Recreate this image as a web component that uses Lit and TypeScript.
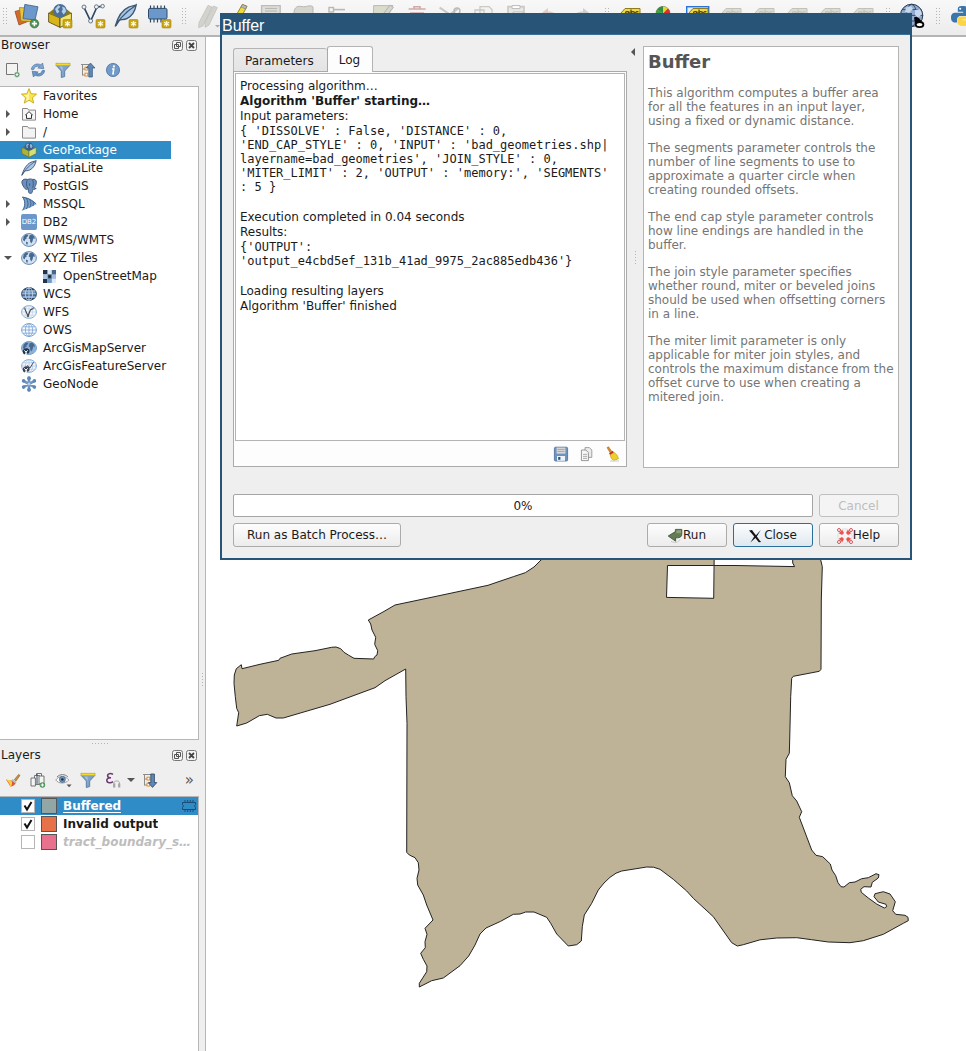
import { LitElement, html, css, svg, nothing, type TemplateResult } from "lit";
import { customElement, property, state } from "lit/decorators.js";
import { classMap } from "lit/directives/class-map.js";
import { styleMap } from "lit/directives/style-map.js";

type Art = ReturnType<typeof svg>;

/* ---------- shared pieces of icon art ---------- */

const newBadge = svg`
  <rect x="15" y="15.5" width="9" height="8.5" rx="1.2" fill="#c9a514" stroke="#a58508" stroke-width=".6"/>
  <path d="M19.5 17v5.6M17 18.3l5 3M22 18.3l-5 3" stroke="#fff8d8" stroke-width="1.3" fill="none"/>`;

const land = svg`
  <path d="M2.6 4.6 5 2.6l2.4.2-.6 1.8-1.4.6.4 1.4-1.6.9-.6 2L2 8Z" fill="#46698f"/>
  <path d="M8.6 3.2 11 2.6l2.3 1.8.7 2.4-1.8-.2-.6 2.6-1.4 2.4-1.2-2.6.2-1.8-1.6-.8Z" fill="#46698f"/>
  <path d="M5 9.6l2 .8-.8 2.6-1-.9Z" fill="#46698f"/>`;

const globeBase = svg`<ellipse cx="8" cy="8" rx="7.4" ry="6.4" fill="#d3e0ef" stroke="#6288b6" stroke-width="1"/>`;

const gridLines = svg`
  <ellipse cx="8" cy="8" rx="3.6" ry="6.4"/><path d="M8 1.6v12.8M.8 8h14.4M2 4.8h12M2 11.2h12"/>`;

const label = (fill: string, ink: string, edge: string): Art => svg`
  <path d="M2.5 9.5 7 4.5h15v13H7L2.5 13Z" fill="${fill}" stroke="${edge}" stroke-width="1"/>
  <g fill="none" stroke="${ink}" stroke-width="1.2">
    <circle cx="9.2" cy="9.4" r="1.8"/><path d="M11 7.4v4.2M13 5.6v6"/><circle cx="14.8" cy="9.4" r="1.8"/>
    <path d="M20.4 8a1.8 1.8 0 1 0 0 2.8"/>
  </g>`;

const funnel = svg`
  <path d="M1.2 3.4h13.6L9.7 9v5.6l-3.4.9V9Z" fill="#7ea2cc" stroke="#4d7298" stroke-width=".8"/>
  <path d="M7.4 8.8 4.6 4.6h3v10Z" fill="#a9c3e0"/>
  <rect x="1" y="1.2" width="14" height="2.6" fill="#f3da2d" stroke="#b79c1d" stroke-width=".6"/>`;

const treeLines = svg`
  <path d="M1 2.5h9M2.5 2.5v11M2.5 7h3M2.5 13h3" stroke="#8c8c8c" stroke-width="1" fill="none"/>
  <rect x="5" y="5.2" width="2.8" height="2.8" fill="#fff" stroke="#ee8b1c"/>
  <rect x="5" y="11.2" width="2.8" height="2.8" fill="#fff" stroke="#ee8b1c"/>`;

const feather = svg`
  <path d="M.8 15.4C2 11 5 4.4 10 2.2c2-.9 4-.9 5.2-1.6-.6 3.4-2.6 7.6-6.4 9.4-2 .9-4 .6-5.4 1.2-1 .8-1.6 2.6-2.6 4.2Z" fill="#a9c6e6" stroke="#3c5673" stroke-width=".9"/>
  <path d="M1.2 15 5 9.4C8 6 11 3.4 14.4 1.4" stroke="#3c5673" stroke-width=".8" fill="none"/>`;

/* ---------- 16px icons ---------- */

const icons: Record<string, Art> = {
  star: svg`<path d="M8 .6 10.1 5.7l5.5.4-4.2 3.6 1.3 5.4L8 12.2l-4.7 2.9 1.3-5.4L.4 6.1l5.5-.4Z" fill="#f9e64b" stroke="#c9a81c" stroke-width=".9"/><path d="M8 3v8.4l-3 1.8.9-3.7-2.9-2.4 3.6-.3Z" fill="#fdf6a6"/>`,
  home: svg`<path d="M1.5 2.5h5l1.2 1.6h6.8v10h-13Z" fill="#f5f5f5" stroke="#8a8a8a"/><path d="M4.6 9 8 5.6 11.4 9H10.500v3.400h-5V9Z" fill="#fff" stroke="#333" stroke-width="1"/>`,
  folder: svg`<path d="M1.5 2.5h5l1.2 1.6h6.8v10h-13Z" fill="#f3f3f3" stroke="#8a8a8a"/>`,
  geopackage: svg`<path d="M.8 5.4 8 8.8v6.4L.8 11.6Z" fill="#a9b33a" stroke="#5b6420" stroke-width=".5"/><path d="M15.2 5.4 8 8.8v6.4l7.2-3.6Z" fill="#d6df78" stroke="#5b6420" stroke-width=".5"/><path d="M2 5 8 1l6 4-6 3.4Z" fill="#4a6a8e"/><circle cx="8" cy="4.4" r="3.9" fill="#3c5b80"/><path d="M5 3l2-1.8 1 1.4L6.4 4l.8 1.4-1.4.8ZM9 2l1.8.6.8 2.2-1.6 1.6-1-1.6Z" fill="#8fb4de"/>`,
  feather,
  elephant: svg`<path d="M1 3.2C2 1 4.6.7 6.4 1.5 8.4.6 10.6 1 11.6 1.4c2.2-.6 3.8.8 3.8 2.8 0 2.2-1.2 4.6-2.4 5.6.6.6 1.6.5 2.2.3-.6 1.4-2.4 1.6-3.4 1-.4 1.8 0 3.6-1.6 4.2-1.6.5-2.6-.4-2.8-2V10.6C6 11.6 5 11.8 4.2 10.8 2.6 9 .2 5.6 1 3.2Z" fill="#6a91be" stroke="#3a5679" stroke-width=".9"/><path d="M6.4 1.8C5.2 3.6 5 8 6.8 10.4M11.4 1.6c1 2 1.4 5 .2 8M8.6 5.4v2.4" fill="none" stroke="#3a5679" stroke-width=".9"/>`,
  mssql: svg`<path d="M1.4 1C6 1.6 11 3.6 15.2 8 12 10.6 7 12.6 1.4 14.4 4.2 10.6 4.4 5 1.4 1Z" fill="#7aa0cd"/><path d="M1.4 1C4.6 4.6 4.6 10.4 1.4 14.4M5 2c2.6 3 2.6 8 .2 11M8.6 3.4c1.8 2.6 1.8 6 0 8.2M11.8 5.2c.8 1.6.8 3.4 0 4.8M1.4 1C7 1.8 12 4.4 15.2 8" stroke="#3d618c" stroke-width="1" fill="none"/>`,
  globe: svg`${globeBase}${land}`,
  tiles: svg`<rect x="2" y="2" width="13" height="13" fill="#dfeaf6"/><g fill="#22344d"><rect x="2" y="2" width="4.4" height="4.4"/><rect x="2" y="10.8" width="4.4" height="4.2"/></g><rect x="6.4" y="6.4" width="4.4" height="4.4" fill="#38506e"/><rect x="7.6" y="7.6" width="2" height="2" fill="#0e1826"/><g fill="#7199c9"><rect x="6.4" y="10.8" width="4.4" height="4.2"/><rect x="10.8" y="6.4" width="4.2" height="4.4" fill="#9dbce0"/></g><rect x="10.8" y="2" width="4.2" height="4.4" fill="#48658a"/><rect x="2" y="6.4" width="4.4" height="4.4" fill="#a9c6e6"/>`,
  wcs: svg`<ellipse cx="8" cy="8" rx="7.4" ry="6.4" fill="#6d97c7" stroke="#2d4765"/><path d="M1 8h14v1.6H1zM3 3h10l1 2H2zM3 13h10l1-1.6H2z" fill="#2d4765"/><g fill="none" stroke="#c9dcf0" stroke-width=".8">${gridLines}</g>`,
  wfs: svg`<ellipse cx="8" cy="8" rx="7.4" ry="6.4" fill="#f4f8fd" stroke="#86abd6"/><g fill="none" stroke="#bcd2ec" stroke-width=".7">${gridLines}</g><path d="M3.6 4.4 7 12l2.4-6 3-1.8" fill="none" stroke="#444" stroke-width="1.1"/><circle cx="3.6" cy="4.4" r="1.1" fill="#888"/><circle cx="12.4" cy="4.2" r="1.1" fill="#888"/><circle cx="7" cy="12" r="1.1" fill="#555"/>`,
  ows: svg`<ellipse cx="8" cy="8" rx="7.4" ry="6.4" fill="#f6faff" stroke="#78a2d3"/><g fill="none" stroke="#78a2d3" stroke-width=".8">${gridLines}</g>`,
  arcmap: svg`${globeBase}<ellipse cx="8" cy="8" rx="7.4" ry="6.4" fill="#8fb0d6"/>${land}<path d="M3 9c2-1.400 4.600-.8 5.400.8.6 1.600-.2 3.600-1.800 4.200L5.600 12 3.400 14.400C1.400 13.200 1 10.600 3 9Z" fill="#22334a"/><path d="M3.200 10.400 5 12l1.800-1.600M5 12v2.600" stroke="#fff" stroke-width="1" fill="none"/>`,
  arcfeature: svg`<ellipse cx="8" cy="8" rx="7.4" ry="6.4" fill="#f2f7fc" stroke="#86abd6"/><g fill="none" stroke="#a6c3e4" stroke-width=".7">${gridLines}</g><path d="M6 7.4 9 10l3.6-6" stroke="#556" fill="none"/><path d="M3 9c2-1.400 4.600-.8 5.400.8.6 1.600-.2 3.600-1.800 4.200L5.600 12 3.400 14.400C1.400 13.200 1 10.600 3 9Z" fill="#3a434f"/><path d="M3.200 10.400 5 12l1.800-1.600M5 12v2.600" stroke="#fff" stroke-width="1" fill="none"/>`,
  geonode: svg`<g stroke="#6d94c1" stroke-width="2.6" stroke-linecap="round"><path d="M8 1.800v12.400M2.400 4.800l11.200 6.400M13.600 4.800 2.400 11.200"/></g><g fill="#5c87b8"><circle cx="8" cy="2.200" r="1.900"/><circle cx="8" cy="13.800" r="1.900"/><circle cx="2.600" cy="4.900" r="1.800"/><circle cx="13.400" cy="4.900" r="1.800"/><circle cx="2.600" cy="11.100" r="1.800"/><circle cx="13.400" cy="11.100" r="1.800"/></g><circle cx="8" cy="8" r="1.400" fill="#b8cfe8"/>`,

  addItem: svg`<path d="M1.500 1.500h11v11h-11z" fill="#f3f3f3" stroke="#757575"/><circle cx="12" cy="12.600" r="2.800" fill="#4f9a5d" stroke="#eee" stroke-width=".6"/><path d="M12 11.200v2.800M10.600 12.600h2.800" stroke="#fff"/>`,
  refresh: svg`<path d="M1.4 7.4C1.8 3 6.6.6 10.8 2.800L12.600 1l1.200 5.800L7.800 6l1.800-1.600C7 3.600 4.200 4.800 3.800 7.400Z" fill="#7fa5d2" stroke="#5379a6" stroke-width=".7"/><path d="M14.600 8.600C14.200 13 9.400 15.400 5.200 13.200L3.400 15 2.200 9.200 8.200 10l-1.800 1.600c2.600.8 5.400-.4 5.800-3Z" fill="#6d96c8" stroke="#47709f" stroke-width=".7"/>`,
  funnel,
  collapse: svg`${treeLines}<path d="M10.500 1 15 6h-2.600v9H8.800V6H6.200Z" fill="#5e88b8" stroke="#36587f" stroke-width=".7"/>`,
  expand: svg`${treeLines}<path d="M10.500 15.400 6.400 10.600h2.400V2h3.600v8.600h2.400Z" fill="#5e88b8" stroke="#27415f" stroke-width=".8"/>`,
  info: svg`<circle cx="8" cy="8" r="6.600" fill="#6f9ac9" stroke="#4c739f" stroke-width=".8"/><path d="M7 6.900h1.800L7.900 11.800h1.200" fill="none" stroke="#fff" stroke-width="1.500"/><circle cx="8.900" cy="4.400" r="1.100" fill="#fff"/>`,

  brush: svg`<path d="M9.400 7.600 13.600 2.400 15 3.400 11 9Z" fill="#c98f43" stroke="#8d5d22" stroke-width=".6"/><path d="M7.600 7 11.600 10 10.600 11.400 6.400 8.400Z" fill="#b9b9b9"/><path d="M1 7.400C3 8 4.600 8.400 6.400 8.400l4.200 3C9 13.600 7 14.600 5.400 14.400 4 12 2.600 9.800 1 7.400Z" fill="#e2542c"/><path d="M1 7.400c2 1.800 4 4.400 4.400 7 2-1.200 2-3.600 1-6Z" fill="#f5cf41"/>`,
  addGroup: svg`<g fill="#f5f5f5" stroke="#666" stroke-width=".9"><path d="M6.500 1.500h5v9h-5z"/><path d="M4.500 3.500h5v9h-5z"/><path d="M1 6h4.400v8H1zM9 4h5v8H9z"/></g><path d="M7 2v10" stroke="#2b4564"/><circle cx="12.400" cy="13" r="2.800" fill="#4f9a5d"/><path d="M12.400 11.400v3.200M10.800 13h3.200" stroke="#fff"/>`,
  eye: svg`<path d="M.8 8C3.400 3.600 10.600 3.400 13.800 8 10.600 12 3.400 12 .8 8Z" fill="#fff" stroke="#9a9a9a"/><circle cx="7.400" cy="7.400" r="3" fill="#6d94c1" stroke="#3f5f86" stroke-width=".7"/><circle cx="7.400" cy="7.400" r="1.200" fill="#1a2838"/><path d="M2 5C5 1.800 10 2 12.800 4.800" stroke="#777" fill="none"/><path d="M11.600 12.600h5l-2.500 2.600Z" fill="#555"/>`,
  epsilon: svg`<path d="M8 2.400C5.600.8 2.400 1.600 2.600 3.800c.1 1.400 1.600 2 3.400 1.900C3.600 5.600 1.600 6.600 1.800 8.600c.2 2.400 4 2.800 6.200 1" fill="none" stroke="#6d3a72" stroke-width="1.600"/><path d="M9 12v-1.400c0-2.200 5.400-2.200 5.400 0V12" fill="none" stroke="#a5a5a5" stroke-width="1"/><path d="M9.200 11.500v4M14.200 11.500v4" stroke="#a5a5a5" stroke-width="2.200"/>`,
  chipLine: svg`<path d="M4 2v2.500M6.700 2v2.500M9.300 2v2.500M12 2v2.500M4 11.500V14M6.700 11.500V14M9.300 11.500V14M12 11.500V14" stroke="#1d4d73" fill="none"/><path d="M1.500 4.500h13v2l-1 1.500 1 1.500v2h-13v-2l1-1.500-1-1.500Z" fill="none" stroke="#1d4d73"/>`,
  save: svg`<rect x="1.400" y="1.200" width="13.200" height="13.800" rx="1.200" fill="#6d93c2" stroke="#4a6c96" stroke-width=".8"/><rect x="3.600" y="1.600" width="8.800" height="6" fill="#d9d9d9"/><path d="M4.400 3.400h7.200M4.400 5.400h7.200" stroke="#999" stroke-width=".8"/><rect x="4" y="10" width="8" height="4.800" fill="#eef3f8"/><rect x="5.200" y="11" width="2.200" height="2.800" fill="#2f4f77"/>`,
  copy: svg`<path d="M6 1.600h4.400l2.400 2.400v7.400H6Z" fill="#ececec" stroke="#8d8d8d" stroke-width=".8"/><path d="M2.400 4h4.400l2.600 2.600v8h-7Z" fill="#f7f7f7" stroke="#808080" stroke-width=".8"/><path d="M4 8.400h4M4 10.400h4M4 12.400h4" stroke="#9a9a9a" stroke-width=".8"/>`,
  broom: svg`<path d="M2 1.600 3.600.8l3.400 5-1.800 1.200Z" fill="#d58f2d" stroke="#9e5f13" stroke-width=".5"/><path d="M4 7.400 7.800 4.800 9 6.400 5.200 9Z" fill="#cf2f22"/><path d="M5.200 9 9 6.400c2 1.400 4 3 4.400 6.400L8.600 14.600C6.600 13.400 5.600 11.400 5.200 9Z" fill="#efcf25" stroke="#b39411" stroke-width=".6"/><path d="M5 15h9" stroke="#ccc"/>`,
  run: svg`<path d="M8.400 1.400h6.400v4.800c0 2.400-1.800 3.600-4.400 3.600H8.600v3.400L1.200 8l7.200-4.400Z" fill="#647c54" stroke="#3b4a31" stroke-width=".8"/><path d="M9.400 2.200h4.600v3H9.400Z" fill="#8aa17a"/><path d="M4 13.400c3 1.600 8 1.400 9-2" stroke="#c8c8c8" fill="none"/>`,
  close: svg`<path d="M1 2.600 4 2c1.400 2 2.600 3.800 4 5.200L12.800 2l-4 6.400c1.400 1.800 2.600 3.600 4.400 5.600l-2.400.2C9.400 12.800 8.400 11.400 7.400 10L2.400 14.400 6.200 8.600C4.600 6.600 2.800 4.400 1 2.600Z" fill="#151515"/>`,
  help: svg`<circle cx="8" cy="8" r="5.400" fill="none" stroke="#f2f2f2" stroke-width="3.600"/><circle cx="8" cy="8" r="7.200" fill="none" stroke="#ccc" stroke-width=".5"/><g fill="#f05050"><path d="M1.800 5.200 5.200 1.800 7 5 5 7ZM14.200 5.200l-3.400-3.400L9 5l2 2ZM1.800 10.800l3.400 3.400L7 11 5 9ZM14.200 10.800l-3.400 3.400L9 11l2-2Z"/></g><g fill="#fff" stroke="#c44" stroke-width=".9"><circle cx="2" cy="2" r="1.500"/><circle cx="14" cy="2" r="1.500"/><circle cx="2" cy="14" r="1.500"/><circle cx="14" cy="14" r="1.500"/></g>`,
};

/* ---------- 24px main toolbar icons ---------- */

const grey = "#c9c9c4";
const tools: Record<string, Art> = {
  addLayer: svg`<path d="M0 7.400 9 5l5 12-10 4Z" fill="#d56a2c" stroke="#8f3f13" stroke-width=".7"/><path d="M4.400 3.600 15 4l2 13.600L6 17Z" fill="#e8c53b" stroke="#967a15" stroke-width=".7"/><path d="M9.800.4 23 2.800 20 16 8 14.600Z" fill="#6d98cb" stroke="#3a5d88" stroke-width=".8"/><circle cx="19.400" cy="19.600" r="4.400" fill="#4c9156" stroke="#356b3e" stroke-width=".6"/><path d="M19.400 17v5.200M16.800 19.600H22" stroke="#fff" stroke-width="1.600"/>`,
  newGeopackage: svg`<path d="M.6 9 12 14v9.400L.6 18Z" fill="#d7b51a" stroke="#4d420c" stroke-width=".8"/><path d="M23.400 9 12 14v9.400L23.400 18Z" fill="#f3e36a" stroke="#4d420c" stroke-width=".8"/><path d="M.6 9 5 5.600h14L23.400 9 12 14Z" fill="#8d7a16"/><circle cx="12" cy="6.800" r="6.800" fill="#4d6f97"/><path d="M7 5l3.400-3.800 2 1.600-2.600 2.400 1.600 2.600-2.400 1.600ZM14 2.400l3 1.400 1.200 3.600-2.600 3-2-3 1.200-1.800Z" fill="#b4cfec"/>${newBadge}`,
  newShape: svg`<path d="M3 3.400 9.600 17 16 3l5-.6" fill="none" stroke="#2d4560" stroke-width="1.600"/><g fill="#eef2f6" stroke="#5a6b7c" stroke-width=".9"><circle cx="3" cy="3" r="2"/><circle cx="9.600" cy="17" r="2"/><circle cx="15.400" cy="2.800" r="2"/><circle cx="21.600" cy="2.200" r="1.800"/></g>${newBadge}`,
  newSpatialite: svg`<g transform="scale(1.46)">${feather}</g>${newBadge}`,
  newMemory: svg`<path d="M3.500 1.400v17M7 1.400v17M10.500 1.400v17M14 1.400v17M17.500 1.400v17" stroke="#2f4a69" stroke-width="1.200"/><rect x="1.500" y="4.400" width="18.500" height="10.600" rx="1.400" fill="#6b97ca" stroke="#2f4a69"/>${newBadge}`,
  pencils: svg`<g fill="#d2d2ce" stroke="#bdbdb8" stroke-width=".7"><path d="M11 1.400 15 3 6 22l-4.400 1.600.4-5Z"/><path d="M16.400 2 20.400 3.600 12 21l-4 2.400.2-5Z"/></g><path d="M18 21h5l-2.500 2.600Z" fill="#aaa"/>`,
  pencil: svg`<path d="M12.400.4 17 2.400 6.400 21.800l-4.800 1.800.4-5Z" fill="#efd93e" stroke="#8b7a16" stroke-width=".9"/><path d="m12.400.4 4.600 2-1.400 2.600-4.600-2Z" fill="#b8b8b8" stroke="#777" stroke-width=".6"/>`,
  saveEdits: svg`<path d="M-1.400 1.600h18.600v18H-1.400Z" fill="#dededb" stroke="#bdbdb8" stroke-width="1.400"/><path d="M2 4.400h12M2 7h12" stroke="#b5b5b0"/>`,
  polygon: svg`<path d="M-2 9C-2 3 2 1.600 6 2.600S14 0 17 3v10H0Z" fill="#d6d6d1" stroke="#b8b8b2"/>`,
  vertices: svg`<rect x="0" y="3.500" width="4.500" height="4.500" fill="none" stroke="#b9b9b4" stroke-width="1.400"/><path d="M5 5.600h11" stroke="#b9b9b4" stroke-width="1.600"/>`,
  modify: svg`<path d="M1.600 1.600H21L16 12H1.600Z" fill="#d9dccb" stroke="#b9bda8"/><path d="m18 1 3.400 2.400-8 10-3-2.400Z" fill="#d4d4d0" stroke="#b4b4b0"/>`,
  trash: svg`<path d="M3.600 5h17M5 9h14M9 5V2.800h6V5" stroke="#d0aaaa" stroke-width="1.600" fill="none"/>`,
  cut: svg`<path d="m1.600 3.600 12 8M20 4.400l-9 7" stroke="${grey}" stroke-width="2" fill="none"/><circle cx="19" cy="7" r="3" fill="none" stroke="#bbb" stroke-width="1.400"/>`,
  copyF: svg`<path d="M9 2.600h9l3 3v8H9Z M4 6h9v10H4Z" fill="#f2f2f0" stroke="${grey}" stroke-width="1.300"/>`,
  paste: svg`<path d="M4 2.600h16v18H4Z" fill="#e8e8e5" stroke="${grey}" stroke-width="1.600"/><path d="M8 1.600h8v3H8ZM9 8h10v8H9Z" fill="#fff" stroke="#bbb"/>`,
  undo: svg`<path d="M4 9.600 11 4v3.400c6 0 9 2 9 7-2-3-5-3.600-9-3.400V15Z" fill="#dfccc6"/>`,
  redo: svg`<path d="M20 9.600 13 4v3.400c-6 0-9 2-9 7 2-3 5-3.600 9-3.400V15Z" fill="#cfcfca"/>`,
  labelOn: svg`<g transform="translate(-2 0)">${label("#eed84a", "#4a3c08", "#8f7c1c")}</g>`,
  diagram: svg`<circle cx="10" cy="9.400" r="7" fill="#e9cf2c" stroke="#333" stroke-width=".5"/><path d="M10 9.400 4.200 5.600A7 7 0 0 1 10 2.400Z" fill="#2f8f45"/><path d="M10 9.400V2.400a7 7 0 0 1 5 2.200Z" fill="#e8d52e"/><path d="M10 9.400 3.800 12.400A7 7 0 0 1 4.200 5.600Z" fill="#38a046"/><path d="M10 9.400 15 4.600a7 7 0 0 1 2 4.800Z" fill="#d8322b"/>`,
  labelBox: svg`<rect x=".7" y="2.700" width="22" height="20" fill="#e5edf7" stroke="#2a72d4" stroke-width="1.400"/>${label("#eed84a", "#4a3c08", "#8f7c1c")}`,
  labelOff: label("#dcdcd5", "#c2c2bb", "#c2c2bb"),
  metasearch: svg`<circle cx="10.600" cy="11.400" r="11.200" fill="#8fabd0" stroke="#26364c" stroke-width="1"/><g fill="none" stroke="#26364c" stroke-width=".8"><ellipse cx="10.600" cy="11.400" rx="5" ry="11"/><path d="M0 11.400h22M1.400 5.600h19M1.400 17h19"/></g><path d="M5 3.600 10 2l2 3-4 4-4-1ZM14 6l5-1 2 5-4 4-3-3Z" fill="#c6d8ed"/><path d="M13 13.400c3-1 5 0 6 2l3 3-3 5-5-4Z" fill="#050505"/><ellipse cx="18.600" cy="20.600" rx="3.800" ry="2.600" fill="#fff" stroke="#050505" stroke-width="1.800"/>`,
  python: svg`<path d="M11.400 2c-4 0-4.600 1.600-4.600 3.400v2.400h5.400v1H4.400C2 8.800 0 10 0 13.600s1.800 5 4 5h2v-3c0-2 1.600-3.600 3.600-3.600h5.400c1.800 0 3-1.400 3-3V5.400C18 3 15.400 2 11.400 2Z" fill="#3a76ab"/><circle cx="9.200" cy="4.800" r="1" fill="#fff"/><path d="M12.400 22c4 0 4.600-1.600 4.600-3.400v-2.400h-5.400v-1h7.800c2.400 0 4-1.200 4-4.800s-1.400-4.600-3.600-4.600h-1.400v3c0 2-1.600 3.600-3.600 3.600H9.400c-1.800 0-3 1.400-3 3v3.200c0 2.400 2 3.400 6 3.400Z" fill="#fbd448"/>`,
};

const icon = (name: string, size = 16): TemplateResult => html`
  <svg class="icon" width=${size} height=${size} viewBox="0 0 16 16" aria-hidden="true">${icons[name]}</svg>`;

const iconCss = css`
  .icon { display: block; flex: none; overflow: visible; }
  button { font: inherit; color: inherit; }
  .bare { border: 0; padding: 0; background: none; display: block; }
`;

/* ---------- main toolbar ---------- */

@customElement("main-toolbar")
class MainToolbar extends LitElement {
  static styles = [iconCss, css`
    :host { display: block; background: linear-gradient(#f8f8f8, #ececec); border-bottom: 2px solid #b4b4b4; overflow: hidden; }
    .bar { display: flex; height: 35px; }
    .tool { flex: none; width: 33px; height: 32px; display: grid; place-items: center; }
    .menu { margin-right: 10px; }
    .grip { flex: none; width: 17px; height: 32px; display: grid; place-items: center; }
    .grip:first-child { width: 10px; }
    .dots { width: 6px; height: 18px; background: radial-gradient(circle, #b5b5b5 0 1px, transparent 1px) 0 0 / 3px 3px; }
  `];

  private groups: string[][] = [
    ["addLayer", "newGeopackage", "newShape", "newSpatialite", "newMemory"],
    ["pencils", "pencil", "saveEdits", "polygon", "vertices", "modify", "trash", "cut", "copyF", "paste", "undo", "redo"],
    ["labelOn", "diagram", "labelBox", "labelOff", "labelOff", "labelOff", "labelOff", "labelOff"],
    ["metasearch"],
    ["python"],
  ];

  render() {
    return html`<div class="bar" role="toolbar">${this.groups.map((g) => html`
      <span class="grip"><span class="dots"></span></span>
      ${g.map((n) => html`<button class=${classMap({ bare: true, tool: true, menu: n === "vertices" })} aria-label=${n}>
        <svg class="icon" width="24" height="24" viewBox="0 0 24 24">${tools[n]}</svg></button>`)}`)}</div>`;
  }
}

/* ---------- dock panels ---------- */

const dockCss = css`
  :host { display: flex; flex-direction: column; min-height: 0; min-width: 0; }
  .head { display: flex; align-items: center; height: 17px; padding: 0 2px 0 1px; gap: 3px; }
  .name { flex: 1; margin: 0; font-size: 12px; font-weight: 400; }
  .tools { display: flex; align-items: center; gap: 9px; padding: 0 5px; height: 32px; }
  .list { flex: 1; min-height: 0; background: #fff; border: solid #b6b6b6; border-width: 1px 1px 1px 0; margin: 0; padding: 0; list-style: none; overflow: hidden; }
`;

const headButtons = html`
  <button class="bare" aria-label="Float"><svg class="icon" width="11" height="11" viewBox="0 0 11 11"><rect x=".5" y=".5" width="10" height="10" rx="2" fill="#f4f4f4" stroke="#777"/><path d="M4.500 2.500h4v4h-4zM2.500 4.500h4v4h-4z" fill="#f4f4f4" stroke="#555"/></svg></button>
  <button class="bare" aria-label="Close panel"><svg class="icon" width="11" height="11" viewBox="0 0 11 11"><rect x=".5" y=".5" width="10" height="10" rx="2" fill="#f4f4f4" stroke="#777"/><path d="m3 3 5 5M8 3 3 8" stroke="#444" stroke-width="1.800"/></svg></button>`;

interface Source { name: string; icon: string; arrow?: "right" | "down"; child?: boolean }

@customElement("browser-panel")
class BrowserPanel extends LitElement {
  static styles = [iconCss, dockCss, css`
    .row { display: grid; grid-template-columns: 15px 16px auto; align-items: center; justify-content: start; gap: 0 6px; width: calc(100% - 27px); height: 18px; text-align: left; white-space: nowrap; }
    .child { padding-left: 20px; box-sizing: border-box; }
    .picked { background: #308cc6; color: #fff; }
    .arrow { justify-self: center; width: 0; height: 0; border: 4px solid transparent; margin-left: 1px; }
    .right { border-left: 4px solid #555; border-right: 0; }
    .down { border-top: 4px solid #555; border-bottom: 0; }
    .badge { width: 16px; height: 16px; border-radius: 2px; background: #6b97ca; color: #fff; font-size: 7px; line-height: 16px; text-align: center; }
  `];

  @state() private picked = "GeoPackage";

  private sources: Source[] = [
    { name: "Favorites", icon: "star" },
    { name: "Home", icon: "home", arrow: "right" },
    { name: "/", icon: "folder", arrow: "right" },
    { name: "GeoPackage", icon: "geopackage" },
    { name: "SpatiaLite", icon: "feather" },
    { name: "PostGIS", icon: "elephant" },
    { name: "MSSQL", icon: "mssql", arrow: "right" },
    { name: "DB2", icon: "db2", arrow: "right" },
    { name: "WMS/WMTS", icon: "globe" },
    { name: "XYZ Tiles", icon: "globe", arrow: "down" },
    { name: "OpenStreetMap", icon: "tiles", child: true },
    { name: "WCS", icon: "wcs" },
    { name: "WFS", icon: "wfs" },
    { name: "OWS", icon: "ows" },
    { name: "ArcGisMapServer", icon: "arcmap" },
    { name: "ArcGisFeatureServer", icon: "arcfeature" },
    { name: "GeoNode", icon: "geonode" },
  ];

  render() {
    return html`
      <div class="head"><h2 class="name">Browser</h2>${headButtons}</div>
      <div class="tools">${["addItem", "refresh", "funnel", "collapse", "info"].map((n) => html`
        <button class="bare" aria-label=${n}>${icon(n)}</button>`)}</div>
      <ul class="list">${this.sources.map((s) => html`<li>
        <button class=${classMap({ bare: true, row: true, child: !!s.child, picked: s.name === this.picked })} @click=${() => (this.picked = s.name)}>
          <span class=${s.arrow ? `arrow ${s.arrow}` : ""}></span>
          ${s.icon === "db2" ? html`<span class="badge">DB2</span>` : icon(s.icon)}
          <span>${s.name}</span>
        </button></li>`)}</ul>`;
  }
}

interface Layer { name: string; color: string; on: boolean; memory?: boolean; off?: boolean }

@customElement("layers-panel")
class LayersPanel extends LitElement {
  static styles = [iconCss, dockCss, css`
    .menu { margin: 0 -2px 0 -3px; border: solid transparent; border-width: 4px 4px 0; border-top-color: #555; }
    .more { margin-left: auto; font-size: 15px; line-height: 16px; color: #555; }
    .list { border-bottom: 0; }
    .row { display: flex; align-items: center; height: 18px; padding: 0 1px 0 21px; font-weight: 700; }
    .picked { background: #308cc6; color: #fff; }
    .picked .text { text-decoration: underline; text-underline-offset: 2px; }
    .off { color: #bdbdbd; font-style: italic; }
    .check { position: relative; width: 14px; height: 14px; }
    .box { appearance: none; display: block; width: 14px; height: 14px; margin: 0; border: 1px solid #b6b6b6; background: #fff; }
    .mark { position: absolute; inset: 0; pointer-events: none; }
    .box:not(:checked) + .mark { display: none; }
    .swatch { width: 14px; height: 14px; border: 1px solid #555; margin: 0 6px; }
    .text { overflow: hidden; text-overflow: ellipsis; white-space: nowrap; }
    .memory { margin-left: auto; }
  `];

  @state() private layers: Layer[] = [
    { name: "Buffered", color: "#92a6a5", on: true, memory: true },
    { name: "Invalid output", color: "#e77148", on: true },
    { name: "tract_boundary_s…", color: "#e8718d", on: false, off: true },
  ];

  private toggle(layer: Layer) {
    this.layers = this.layers.map((l) => (l === layer ? { ...l, on: !l.on } : l));
  }

  render() {
    return html`
      <div class="head"><h2 class="name">Layers</h2>${headButtons}</div>
      <div class="tools">
        ${["brush", "addGroup", "eye", "funnel", "epsilon"].map((n) => html`<button class="bare" aria-label=${n}>${icon(n)}</button>`)}
        <span class="menu"></span>
        <button class="bare" aria-label="Expand all">${icon("expand")}</button>
        <button class="bare more" aria-label="More">»</button>
      </div>
      <ul class="list">${this.layers.map((l, i) => html`<li class=${classMap({ row: true, picked: i === 0, off: !!l.off })}>
        <span class="check"><input class="box" type="checkbox" id="layer${i}" .checked=${l.on} @change=${() => this.toggle(l)}>
          <svg class="mark" width="14" height="14" viewBox="0 0 14 14"><path d="M3.500 6.500 6 10.500 10.500 3" fill="none" stroke="#111" stroke-width="2"/></svg></span>
        <span class="swatch" style=${styleMap({ background: l.color })}></span>
        <label class="text" for="layer${i}">${l.name}</label>
        ${l.memory ? html`<span class="memory">${icon("chipLine")}</span>` : nothing}
      </li>`)}</ul>`;
  }
}

/* ---------- map ---------- */

@customElement("map-canvas")
class MapCanvas extends LitElement {
  static styles = css`
    :host { display: block; background: #fff; min-width: 0; overflow: hidden; }
    .map { display: block; width: 100%; height: 100%; }
    .area { fill: #beb297; }
    .hole { fill: #fff; }
    .edge { fill: none; stroke: #232323; stroke-width: 1; stroke-linejoin: round; }
  `;

  private outline = `M560 545 541 560 534 567 525.3 572.7 513.3 576.7 488 585.3 440 595.5 395 605 383 612 368.3 620 370.7 624 372 630 375.7 637.3
    374.7 644.3 377.7 650.7 377 655 374.7 656.7 373.7 659 354 658.3 348.3 655 344 652.3 340.7 648.7 336 647 331.7 647.3
    315 650.7 291.7 654 280 658.3 278.7 660.3 260 664.3 242 668.7 241.3 664.7 236.3 668.7 234.3 675 234 683.3 235.3 696.7
    236.7 708.3 238.7 712.7 236.7 726 246.7 723 259.3 715.7 267.3 714.3 276 718 283.3 718 330 704.3 375 687.7 385 680.7
    405.7 669 406 696.7 407 723.3 406.7 852.3 409.3 855 415 857.7 418.3 862.7 419 870 417 878.3 417.7 885 423.3 895
    426.7 905 433 920 425 928.3 427 934.3 425 941.7 425.3 947.7 420.7 953.3 423.3 959.3 427 966 426.7 971.7 419.3 983.3
    419.3 987 431.7 980.7 443.3 978 460 965.7 468.7 956 475 945 480 934 486 928 500.7 921.3 513.3 914.3 520 914 525.7 912
    534 912 546.7 917.3 550.7 923.3 556.7 934 568.3 946 576.7 944.7 581.3 941 582.3 926.7 584.3 915 591.7 903.3
    598.3 890 604 883 610 877.3 616 873.2 621.7 871 646.7 867 653.5 867.2 660 869.3 673.3 879.3 686.7 891 693.3 898.3
    713.3 916.7 731.7 942.7 737.3 946 743.3 944.7 760 939.8 776.7 938 796.7 937.7 811.7 939.7 828.3 942 850 942.7
    863.3 940.7 883.3 934.3 903.3 923.3 908.3 920.7 908 917.3 905 915.3 895.7 914.3 892.7 910.7 895.3 901.7
    890 894 883.3 891.7 875 893.7 874 896.7 878.3 902 886 904.3 886.7 906.7 884.3 908 876.7 904 868.3 898 861.3 892.3
    860.7 889.3 864 886.7 871 887 872.3 882.3 878.3 878 879 874.7 876 873.7 868.3 877.7 861.7 878.7 855 882
    849.3 882.7 844 887 841 886.7 838 882.7 835.7 875.7 832 870 830.3 864 822.7 856.7 816 855.3 811.7 850 799.3 817.3
    801.7 811.7 796.7 801 792.3 795.7 789.3 782.7 785.3 776.7 786 759.3 789.3 753.3 789.7 740 790.7 696.7
    791.7 678.3 793.3 676.3 819.3 671.3 821 669.3 821.3 600 822.3 566.7 820.7 560 815 545Z`;

  render() {
    return html`<svg class="map" viewBox="206 37 760 1014" preserveAspectRatio="xMinYMin meet" role="img" aria-label="Buffered layer">
      <path class="area" d=${this.outline}/>
      <path class="edge" d=${this.outline}/>
      <path class="hole" d="M667.5 565.5 714.3 565.3 713.7 598.3 666.5 597.4Z"/>
      <path class="hole" d="M714.3 545V565.3L794.6 566.6 792.7 563V545Z"/>
      <path class="edge" d="M714.3 545 713.7 598.3 666.5 597.4 667.5 565.5H735L794.6 566.6 792.7 563V545"/>
    </svg>`;
  }
}

/* ---------- dialog ---------- */

@customElement("buffer-dialog")
class BufferDialog extends LitElement {
  static styles = [iconCss, css`
    :host { display: block; border: 2px solid #285577; border-top: 0; background: #efefef; }
    .title { margin: 0; height: 21px; padding: 0; background: #285577; border-bottom: 1px solid #3a719b; color: #fff; font: 16px/26px "Liberation Sans", Arial, sans-serif; overflow: hidden; }
    .body { display: grid; gap: 26px; padding: 11px; }
    .main { display: grid; grid-template-columns: minmax(0, 1fr) 16px 256px; min-height: 422px; }
    .left { display: flex; flex-direction: column; padding-bottom: 1px; }
    .tabs { display: flex; align-items: flex-end; height: 25px; }
    .tab { border: 1px solid #b4b4b4; border-bottom: 0; border-radius: 3px 3px 0 0; height: 23px; padding: 3px 13px 0 11px; background: linear-gradient(#ebebeb, #e4e4e4); }
    .tab.on { position: relative; height: 26px; margin-bottom: -1px; padding: 2px 12px 0 11px; background: #fdfdfd; border-left-color: #a8a8a8; }
    .tab.first { border-right: 0; }
    .frame { flex: 1; display: flex; flex-direction: column; border: 1px solid #ababab; padding: 1px 1px 0; background: #fdfdfd; }
    .log { flex: 1; border: 1px solid #b4b4b4; background: #fff; padding: 5px 4px; line-height: 15px; }
    .log p { margin: 0; min-height: 15px; }
    .log .code { font: 12px/14px "DejaVu Sans Mono", monospace; min-height: 0; margin-bottom: 1px; white-space: pre-wrap; }
    .log .gap { height: 15px; }
    .actions { display: flex; justify-content: flex-end; align-items: center; gap: 10px; height: 25px; padding-right: 4px; }
    .split { display: flex; flex-direction: column; align-items: center; justify-content: space-between; padding: 2px 0 202px; }
    .fold { border: solid transparent; border-width: 4px 4px 4px 0; border-right-color: #555; margin-right: 4px; }
    .dots { width: 3px; height: 16px; background: radial-gradient(circle, #b5b5b5 0 1px, transparent 1px) 0 0 / 3px 3px; }
    .help { border: 1px solid #b4b4b4; background: #fff; color: #757575; padding: 4px; line-height: 14px; }
    .help h2 { margin: 0 0 13px; font-size: 18px; line-height: 22px; color: #555; }
    .help p { margin: 0 0 13px; }
    .foot { display: grid; gap: 6px; }
    .line { display: flex; gap: 6px; }
    .progress { flex: 1; height: 21px; border: 1px solid #a5a5a5; border-radius: 2px; background: #fff; text-align: center; line-height: 22px; }
    .btn { display: flex; align-items: center; justify-content: center; box-sizing: border-box; width: 80px; height: 24px; padding: 1px 1px 0 0; border: 1px solid #ababab; border-radius: 3px; background: linear-gradient(#fdfdfd, #ececec); white-space: nowrap; }
    .batch { width: auto; padding: 1px 13px 0; margin-right: auto; }
    .focus { border-color: #286f9e; background: linear-gradient(#fcfdfe, #dfe8ef); }
    .btn:disabled { height: 23px; color: #bebebe; border-color: #bfbfbf; background: #f4f4f4; }
  `];

  @property() name = "Buffer";

  render() {
    return html`
      <h1 class="title">${this.name}</h1>
      <div class="body">
        <div class="main">
          <div class="left">
            <div class="tabs" role="tablist">
              <button class="tab first" role="tab" aria-selected="false">Parameters</button>
              <button class="tab on" role="tab" aria-selected="true">Log</button>
            </div>
            <div class="frame" role="tabpanel">
              <div class="log">
                <p>Processing algorithm…</p>
                <p><b>Algorithm 'Buffer' starting…</b></p>
                <p>Input parameters:</p>
                <p class="code">{ 'DISSOLVE' : False, 'DISTANCE' : 0, 'END_CAP_STYLE' : 0, 'INPUT' : 'bad_geometries.shp|<wbr>layername=bad_geometries', 'JOIN_STYLE' : 0, 'MITER_LIMIT' : 2, 'OUTPUT' : 'memory:', 'SEGMENTS' : 5 }</p>
                <p class="gap"></p>
                <p>Execution completed in 0.04 seconds</p>
                <p>Results:</p>
                <p class="code">{'OUTPUT': 'output_e4cbd5ef_131b_41ad_9975_2ac885edb436'}</p>
                <p class="gap"></p>
                <p>Loading resulting layers</p>
                <p>Algorithm 'Buffer' finished</p>
              </div>
              <div class="actions">${["save", "copy", "broom"].map((n) => html`<button class="bare" aria-label=${n}>${icon(n)}</button>`)}</div>
            </div>
          </div>
          <div class="split"><span class="fold"></span><span class="dots"></span></div>
          <section class="help">
            <h2>Buffer</h2>
            <p>This algorithm computes a buffer area for all the features in an input layer, using a fixed or dynamic distance.</p>
            <p>The segments parameter controls the number of line segments to use to approximate a quarter circle when creating rounded offsets.</p>
            <p>The end cap style parameter controls how line endings are handled in the buffer.</p>
            <p>The join style parameter specifies whether round, miter or beveled joins should be used when offsetting corners in a line.</p>
            <p>The miter limit parameter is only applicable for miter join styles, and controls the maximum distance from the offset curve to use when creating a mitered join.</p>
          </section>
        </div>
        <div class="foot">
          <div class="line">
            <div class="progress" role="progressbar" aria-valuenow="0" aria-valuemin="0" aria-valuemax="100">0%</div>
            <button class="btn" disabled>Cancel</button>
          </div>
          <div class="line">
            <button class="btn batch">Run as Batch Process…</button>
            <button class="btn">${icon("run")}Run</button>
            <button class="btn focus">${icon("close")}Close</button>
            <button class="btn">${icon("help")}Help</button>
          </div>
        </div>
      </div>`;
  }
}

/* ---------- window ---------- */

@customElement("app-root")
class AppRoot extends LitElement {
  static styles = css`
    :host { display: flex; flex-direction: column; position: relative; height: 100vh; overflow: hidden; background: #efefef; color: #1a1a1a; font: 12px/15px "DejaVu Sans", Verdana, sans-serif; }
    .work { flex: 1; min-height: 0; display: grid; grid-template-columns: 199px 7px minmax(0, 1fr); }
    .side { display: grid; grid-template-rows: minmax(0, 703fr) 7px minmax(0, 304fr); min-height: 0; }
    .hsplit, .vsplit { display: grid; place-items: center; }
    .hdots { width: 18px; height: 3px; background: radial-gradient(circle, #b5b5b5 0 1px, transparent 1px) 0 0 / 3px 3px; }
    .vsplit { border-right: 1px solid #b6b6b6; grid-template-rows: 635fr 15px 364fr; }
    .vdots { grid-row: 2; width: 3px; height: 15px; background: radial-gradient(circle, #b5b5b5 0 1px, transparent 1px) 0 0 / 3px 3px; }
    .dialog { position: absolute; top: 13px; left: 220px; right: 54px; }
  `;

  render() {
    return html`
      <main-toolbar></main-toolbar>
      <div class="work">
        <div class="side">
          <browser-panel></browser-panel>
          <div class="hsplit"><span class="hdots"></span></div>
          <layers-panel></layers-panel>
        </div>
        <div class="vsplit"><span class="vdots"></span></div>
        <map-canvas></map-canvas>
      </div>
      <buffer-dialog class="dialog" role="dialog"></buffer-dialog>`;
  }
}
